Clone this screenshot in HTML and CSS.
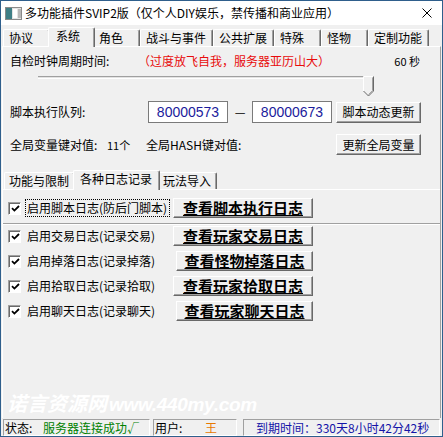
FILE: index.html
```html
<!DOCTYPE html>
<html lang="zh-CN">
<head>
<meta charset="UTF-8">
<title>多功能插件SVIP2版</title>
<link rel="stylesheet" href="styles.css">
</head>
<body>
<div class="win">
  <!-- 标题栏 -->
  <div class="titlebar">
    <svg class="appicon" viewBox="0 0 17 13" aria-hidden="true">
      <rect x="0.5" y="0.5" width="16" height="12" fill="#e4e4e4" stroke="#8a8a8a"/>
      <rect x="1" y="1" width="6" height="11" fill="#3f7f86"/>
      <rect x="8" y="2" width="4" height="9" fill="#fff"/>
      <rect x="13" y="2" width="3" height="9" fill="#b8b8b8"/>
    </svg>
    <span class="title">多功能插件SVIP2版（仅个人DIY娱乐，禁传播和商业应用）</span>
    <svg class="close" viewBox="0 0 10 10" aria-hidden="true"><path d="M0.5 0.5L9.5 9.5M9.5 0.5L0.5 9.5" stroke="#000" stroke-width="1"/></svg>
  </div>

  <!-- 主选项卡 -->
  <div class="tabs">
    <div class="tab">协议</div>
    <div class="tab on">系统</div>
    <div class="tab">角色</div>
    <div class="tab">战斗与事件</div>
    <div class="tab">公共扩展</div>
    <div class="tab">特殊</div>
    <div class="tab">怪物</div>
    <div class="tab">定制功能</div>
  </div>

  <div class="page">
    <div class="row clock">
      <span class="lbl w128">自检时钟周期时间:</span>
      <span class="warn">（过度放飞自我，服务器亚历山大）</span>
      <span class="sec">60 秒</span>
    </div>
    <div class="slider">
      <div class="track"></div>
      <svg class="thumb" viewBox="0 0 11 21" aria-hidden="true">
        <path d="M0.5 15V0.5H10.5V15L5.5 20Z" fill="#f0f0f0"/>
        <path d="M0.5 15V0.5H10" fill="none" stroke="#fff"/>
        <path d="M10.5 0.5V15L5.5 20L0.5 15" fill="none" stroke="#696969"/>
        <path d="M9.5 1.5V14.6L5.5 18.6" fill="none" stroke="#a0a0a0"/>
      </svg>
    </div>

    <div class="row queue">
      <span class="lbl w138">脚本执行队列:</span>
      <span class="field">80000573</span>
      <span class="dash">—</span>
      <span class="field">80000673</span>
      <button class="btn">脚本动态更新</button>
    </div>

    <div class="row vars">
      <span class="lbl w97">全局变量键对值:</span>
      <span class="cnt">11个</span>
      <span class="lbl">全局HASH键对值:</span>
      <button class="btn">更新全局变量</button>
    </div>

    <!-- 子选项卡 -->
    <div class="tabs sub">
      <div class="tab">功能与限制</div>
      <div class="tab on">各种日志记录</div>
      <div class="tab">玩法导入</div>
    </div>

    <div class="logrow top">
      <span class="chk"><svg viewBox="0 0 9 9"><path d="M1 4.2L3.4 6.6L8 2" fill="none" stroke="#000" stroke-width="1.8"/></svg></span>
      <span class="opt focus">启用脚本日志(防后门脚本)</span>
      <button class="btn big">查看脚本执行日志</button>
    </div>

    <div class="logbox">
      <div class="logrow">
        <span class="chk"><svg viewBox="0 0 9 9"><path d="M1 4.2L3.4 6.6L8 2" fill="none" stroke="#000" stroke-width="1.8"/></svg></span>
        <span class="opt">启用交易日志(记录交易)</span>
        <button class="btn big">查看玩家交易日志</button>
      </div>
      <div class="logrow">
        <span class="chk"><svg viewBox="0 0 9 9"><path d="M1 4.2L3.4 6.6L8 2" fill="none" stroke="#000" stroke-width="1.8"/></svg></span>
        <span class="opt">启用掉落日志(记录掉落)</span>
        <button class="btn big nar">查看怪物掉落日志</button>
      </div>
      <div class="logrow">
        <span class="chk"><svg viewBox="0 0 9 9"><path d="M1 4.2L3.4 6.6L8 2" fill="none" stroke="#000" stroke-width="1.8"/></svg></span>
        <span class="opt">启用拾取日志(记录拾取)</span>
        <button class="btn big">查看玩家拾取日志</button>
      </div>
      <div class="logrow">
        <span class="chk"><svg viewBox="0 0 9 9"><path d="M1 4.2L3.4 6.6L8 2" fill="none" stroke="#000" stroke-width="1.8"/></svg></span>
        <span class="opt">启用聊天日志(记录聊天)</span>
        <button class="btn big nar">查看玩家聊天日志</button>
      </div>
    </div>

    <div class="watermark"><span class="wm-cn">诺言资源网</span>www.440my.com</div>
  </div>

  <!-- 状态栏 -->
  <div class="statusbar">
    <div class="panel p1"><span class="key">状态:</span><span class="ok">服务器连接成功√</span></div>
    <div class="panel p2"><span class="key k2">用户:</span><span class="user">王</span></div>
    <div class="panel p3"><span class="exp">到期时间：330天8小时42分42秒</span></div>
  </div>
</div>
</body>
</html>
```

FILE: styles.css
```css
/* ---- reset ---- */
*,*::before,*::after{box-sizing:border-box;margin:0;padding:0}
body{width:443px;height:437px;overflow:hidden;background:#f0f0f0;color:#000;
  font:12px/16px "Noto Sans CJK SC","Liberation Sans",sans-serif}

/* ---- window frame ---- */
.win{width:443px;height:437px;border:1px solid #2f5f8c;display:flex;flex-direction:column;background:#f0f0f0}

/* ---- title bar ---- */
.titlebar{height:24px;background:#fff;display:flex;align-items:center;padding:0 10px 0 4px}
.appicon{width:17px;height:13px;margin-right:3px;flex:none}
.title{flex:1;font-size:12px;line-height:18px;color:#000}
.close{width:10px;height:10px;flex:none}

/* ---- tab strips ---- */
.tabs{height:21px;display:flex;align-items:flex-end;padding-left:2px}
.tab{height:17px;min-width:47px;padding:0 6px 0 5px;line-height:15px;white-space:nowrap;
  border:1px solid;border-color:#fff #696969 transparent #fff;border-bottom:0;border-radius:2px 2px 0 0;
  box-shadow:inset -1px 0 #a0a0a0;background:#f0f0f0}
.tab.on{height:20px;margin:0 -2px -1px;padding:0 8px 0 7px;line-height:16px;position:relative;z-index:1}

/* ---- tab page ---- */
.page{flex:1;position:relative;margin:0 1px;padding:0 7px;
  border-top:1px solid #fff;border-left:1px solid #fff;border-right:1px solid #a0a0a0}

.row{display:flex;align-items:center;white-space:nowrap}
.lbl{flex:none}
.w128{width:128px}
.w138{width:138px}
.w97{width:97px}

.clock{height:16px;margin-top:6px}
.warn{color:#e80c0c}
.sec{margin-left:auto;margin-right:13px;font-size:11px}

/* slider */
.slider{height:20px;position:relative}
.track{margin:7px 0 0 28px;width:330px;height:3px;border-top:1px solid #a0a0a0;border-bottom:1px solid #fff;background:#e3e3e3}
.thumb{position:absolute;left:353px;top:0;width:11px;height:21px}

.queue{height:22px;margin-top:5px}
.field{width:80px;height:22px;border:1px solid #7a7a7a;background:#fff;color:#1b1b9c;
  font:14px/20px "Liberation Sans",sans-serif;text-align:center}
.dash{width:24px;text-align:center;font-size:12px}
.queue .btn{margin-left:4px}

.vars{height:21px;margin-top:11px}
.cnt{width:39px;font-size:11px}
.vars .btn{margin-left:auto;margin-right:12px}

/* buttons */
.btn{font:12px/16px "Noto Sans CJK SC",sans-serif;color:#000;background:#f0f0f0;
  width:85px;height:21px;border:1px solid;border-color:#fff #696969 #696969 #fff;
  box-shadow:inset -1px -1px #a0a0a0}
.btn.big{width:140px;height:20px;font-size:15px;line-height:16px;font-weight:700;
  text-decoration:underline;text-underline-offset:1px}
.btn.nar{width:137px;margin-left:3px}

/* sub tabs */
.tabs.sub{margin:13px -7px 0;height:22px;padding-left:1px;border-bottom:1px solid #fff}
.tabs.sub .tab{padding:0 5px 0 4px}
.tabs.sub .tab.on{padding:0 7px 0 6px}

/* log rows */
.logrow{height:20px;display:flex;align-items:center;white-space:nowrap}
.logrow.top{margin:8px 0 0 -2px}
.chk{width:13px;height:13px;flex:none;background:#fff;border:1px solid;border-color:#a0a0a0 #fff #fff #a0a0a0;
  box-shadow:inset 1px 1px #696969;display:flex;align-items:center;justify-content:center}
.chk svg{width:9px;height:9px;margin:1px 0 0 1px}
.opt{width:145px;margin:0 3px 0 4px;padding:0 1px;border:1px solid transparent;line-height:16px;flex:none}
.opt.focus{border:1px dotted #000}

.logbox{margin:5px -7px 0;padding:2px 0 0 5px;border-top:1px solid #a0a0a0;box-shadow:inset 0 1px #fff;
  display:flex;flex-direction:column;gap:5px}

/* overlay caption */
.watermark{position:absolute;left:4px;top:344px;color:#fff;font:italic 700 19px/24px "Liberation Sans",sans-serif;
  letter-spacing:-0.3px;white-space:nowrap}
.wm-cn{font:italic 700 20px/24px "Noto Sans CJK SC",sans-serif;letter-spacing:0;margin-right:2px}

/* ---- status bar ---- */
.statusbar{height:18px;display:flex;padding:1px 0 0 2px}
.panel{height:17px;display:flex;align-items:center;white-space:nowrap;
  border:1px solid;border-color:#a0a0a0 #fff #fff #a0a0a0}
.p1{width:147px}
.p2{width:84px;margin-left:3px}
.p3{width:197px;margin-left:6px;padding-left:12px}
.key{width:39px;padding-left:1px}
.k2{width:51px}
.ok{color:#008000}
.user{color:#e87800}
.exp{color:#1414a8}
```
